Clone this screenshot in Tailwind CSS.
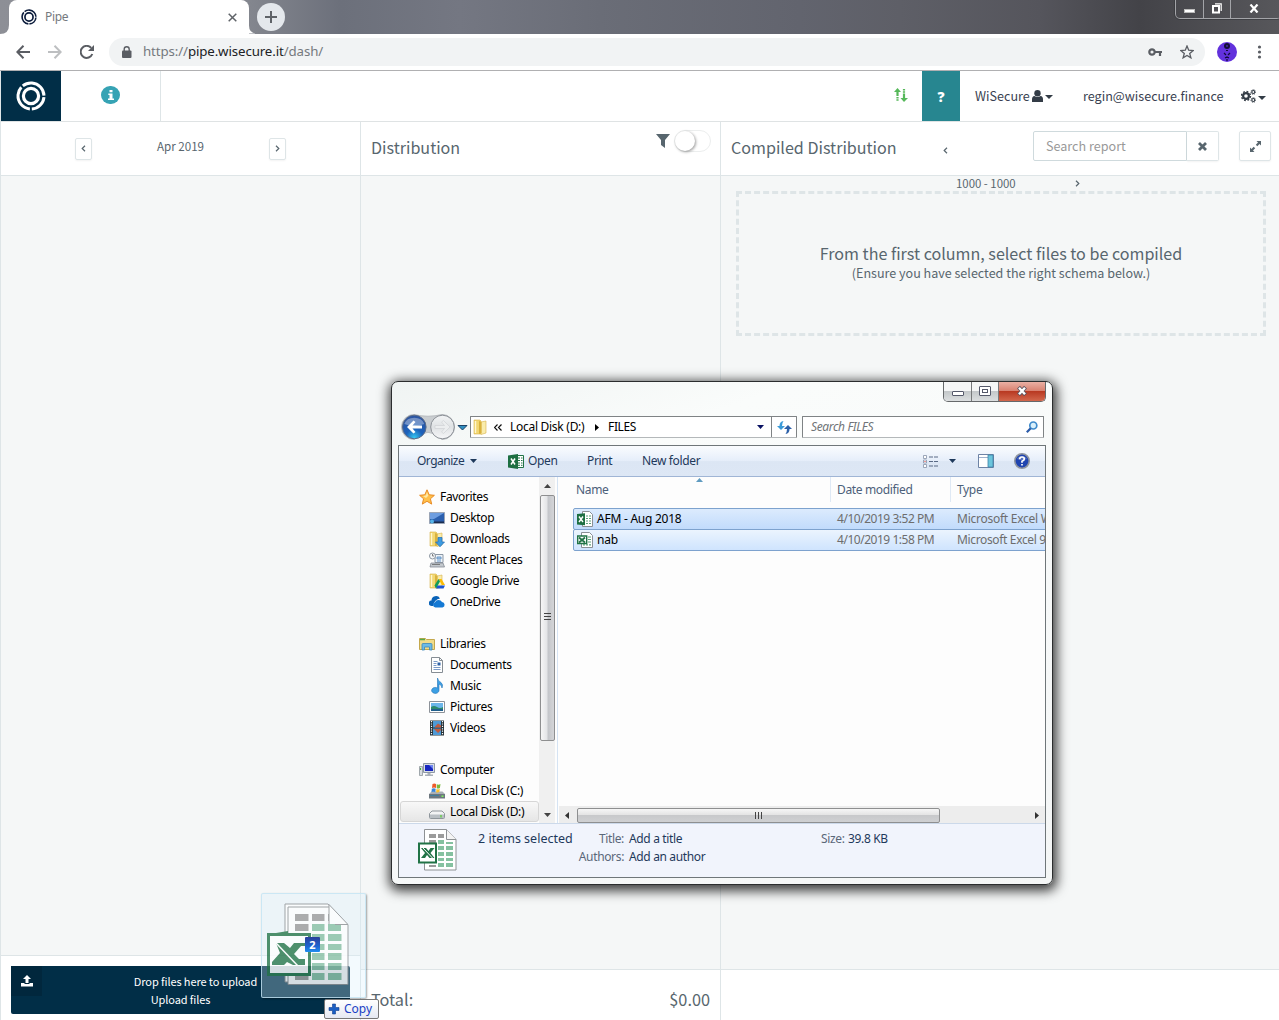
<!DOCTYPE html>
<html lang="en">
<head>
<meta charset="utf-8">
<title>Pipe</title>
<script src="https://cdn.jsdelivr.net/npm/@tailwindcss/browser@4"></script>
</head>
<body class="w-[1279px] h-[1020px] overflow-hidden relative bg-white font-['Noto_Sans_CJK_JP',sans-serif] text-[#58666e] whitespace-nowrap">
<svg class="hidden">
  <symbol id="rings" viewBox="0 0 30 30"><g fill="none" stroke="currentColor"><circle cx="15" cy="15" r="7.6" stroke-width="3.2"/><circle cx="15" cy="15" r="13" stroke-width="3" stroke-dasharray="18.4 2 28.600 2 28.700 2" transform="rotate(4.500 15 15)"/></g></symbol>
  <symbol id="folder" viewBox="0 0 16 16"><path d="M1 1h6l1 1v13H1z" fill="#f3d873" stroke="#d9b44a" stroke-width=".6"/><path d="M8 3l5-1v12l-5 1.5z" fill="#f9ecac" stroke="#d9b44a" stroke-width=".6"/><path d="M6 2v13l2.500-1V3z" fill="#d9b23c"/><path d="M2.500 2v12" stroke="#fff6cf" stroke-width="1.4"/></symbol>
</svg>

<!-- browser chrome -->
<div class="flex h-[34px] bg-[linear-gradient(90deg,#8d8f96_0,#83868e_250px,#6c707b_340px,#747782_460px,#6a6d77_600px,#62646e_800px,#5e5f67_900px,#55555c_1040px,#434348_1140px,#57575b_1279px)]">
  <div class="w-[9px] flex items-end"><svg class="w-[9px] h-[9px]" viewBox="0 0 9 9"><path d="M9 0v9H0Q9 9 9 0z" fill="#fff"/></svg></div>
  <div class="w-[240px] bg-white rounded-t-lg flex items-center">
    <svg class="w-4 h-4 ml-3 text-[#0c1c3c]"><use href="#rings"/></svg>
    <span class="ml-2 w-[183px] font-['Noto_Sans'] text-[12px] tracking-[-0.3px] text-[#75797e]">Pipe</span>
    <svg class="w-[9px] h-[9px]" viewBox="0 0 9 9"><path d="M.7.7l7.6 7.6M8.3.7L.7 8.3" stroke="#5f6368" stroke-width="1.5"/></svg>
  </div>
  <div class="w-[8px] flex items-end"><svg class="w-[9px] h-[9px]" viewBox="0 0 9 9"><path d="M0 0v9h9Q0 9 0 0z" fill="#fff"/></svg></div>
  <div class="pt-[3px]"><div class="w-7 h-7 rounded-full bg-[#e4e8ec] flex items-center justify-center"><svg class="w-3 h-3" viewBox="0 0 12 12"><path d="M6 0v12M0 6h12" stroke="#5f6368" stroke-width="2"/></svg></div></div>
  <div class="ml-auto mr-[-3px] w-[107px] h-[18.5px] flex border border-t-0 border-[#a3a4a8] rounded-b-[5px] outline outline-[#2e2f33]/50">
    <div class="w-[28px] border-r border-[#a3a4a8] flex justify-center pt-[9px]"><div class="w-[11px] h-[4px] bg-white border border-[#bbb]"></div></div>
    <div class="w-[27px] border-r border-[#a3a4a8] flex justify-center pt-[3px]"><svg class="w-[10px] h-[11px]" viewBox="0 0 10 11"><path d="M3 .8h6.2V8" fill="none" stroke="#fff" stroke-width="1.2"/><rect x="1" y="3" width="6" height="6.5" fill="none" stroke="#fff" stroke-width="2"/></svg></div>
    <div class="w-[46px] flex justify-center pt-[4px]"><svg class="w-[10px] h-[9px]" viewBox="0 0 10 9"><path d="M1.500.5l7 8M8.500.5l-7 8" stroke="#fff" stroke-width="2.2"/></svg></div>
  </div>
</div>
<div class="flex items-center h-[37px] bg-white border-b border-[#b0b0b2]">
  <svg class="ml-4 w-[14px] h-[14px]" viewBox="0 0 14 14"><path d="M14 7H2M7.500.8L1.300 7l6.200 6.200" fill="none" stroke="#5a5d63" stroke-width="2"/></svg>
  <svg class="ml-[18px] w-[14px] h-[14px]" viewBox="0 0 14 14"><path d="M0 7h12M6.500.8L12.700 7l-6.200 6.200" fill="none" stroke="#bdbfc1" stroke-width="2"/></svg>
  <svg class="ml-[18px] w-[14px] h-[14px]" viewBox="0 0 14 14"><path d="M12.300 9A6 6 0 1 1 11.200 2.900" fill="none" stroke="#5a5d63" stroke-width="2"/><path d="M14 0v6H8z" fill="#5a5d63"/></svg>
  <div class="ml-[15px] w-[1096px] h-7 rounded-full bg-[#f1f3f4] flex items-center">
    <svg class="ml-[13px] w-[10px] h-[13px]" viewBox="0 0 10 13"><rect x="0" y="4.500" width="9.500" height="7.500" rx="1" fill="#5a5d63"/><path d="M2.200 5V3.200a2.500 2.500 0 0 1 5 0V5" fill="none" stroke="#5a5d63" stroke-width="1.400"/></svg>
    <span class="ml-[11px] font-['Noto_Sans'] text-[13.300px] tracking-[-0.120px] text-[#75797e]">https://<span class="text-[#202124]">pipe.wisecure.it</span>/dash/</span>
    <svg class="ml-auto w-[14px] h-[8px]" viewBox="0 0 14 8"><circle cx="4" cy="4" r="2.700" fill="none" stroke="#5a5d63" stroke-width="2.200"/><path d="M7 4h7M12 4v4" stroke="#5a5d63" stroke-width="2.200"/></svg>
    <svg class="ml-[18px] mr-[11px] w-[14px] h-[14px]" viewBox="0 0 14 14"><path d="M7 1l1.700 4.200 4.500.3-3.500 2.900 1.200 4.400L7 10.400l-3.900 2.400 1.200-4.400L.8 5.500l4.500-.3z" fill="none" stroke="#5a5d63" stroke-width="1.300"/></svg>
  </div>
  <svg class="ml-[12px] w-5 h-5" viewBox="0 0 20 20"><circle cx="10" cy="10" r="10" fill="#6231dc"/><ellipse cx="10" cy="4" rx="3" ry="3" fill="#120b38"/><path d="M9 3.500h2v1H9z" fill="#6231dc"/><path d="M9 8.500h2M7 11l2 2M13 11l-2 2M8 16l2-1 2 1M10 17v2" stroke="#120b38" stroke-width="1.200"/></svg>
  <svg class="ml-[20px] w-[5px] h-[14px]" viewBox="0 0 5 14"><g fill="#5a5d63"><circle cx="2.500" cy="2" r="1.600"/><circle cx="2.500" cy="7" r="1.600"/><circle cx="2.500" cy="12" r="1.600"/></g></svg>
</div>

<!-- application -->
<div class="h-[949px] border-l border-[#dee5e7] flex flex-col">
  <header class="h-[51px] flex-none flex bg-white border-b border-[#dfe3e4] text-[#3a3f51]">
    <div class="w-[60px] h-[50px] bg-[#012e47] flex items-center justify-center text-white"><svg class="w-[30px] h-[30px]"><use href="#rings"/></svg></div>
    <div class="w-[100px] h-[50px] border-r border-[#dee5e7] flex items-center justify-center pb-[2px]"><div class="w-[19px] h-[18px] rounded-full bg-[#36a3b4] flex justify-center items-center"><svg class="w-[6px] h-[10px]" viewBox="0 0 6 10"><path d="M1.500 0h3v2.200h-3zM.3 3.500h4.200v5H6V10H0V8.500h1.500V5H.3z" fill="#fff"/></svg></div></div>
    <div class="ml-auto flex h-[50px] items-center">
      <svg class="w-[14px] h-[16px] mr-[14px] mb-[2px]" viewBox="0 0 14 16"><g fill="#56b85a"><path d="M3.500 1L7 5H4.600v4H2.400V5H0z"/><path d="M2.400 10h2.200v1.600H2.400zM2.400 12.300h2.200v1.500H2.400zM8.900 2h2.200v1.600H8.900zM8.900 4.300h2.200v1.500H8.900zM10 15l-3.500-4h2.400V6.500h2.200V11H14z"/></g></svg>
      <div class="w-[38px] h-[50px] bg-[#278690] flex items-center justify-center text-white font-black text-[14px] font-['Noto_Sans']">?</div>
      <div class="w-[108px] pl-[15px] flex items-center text-[12.600px]"><span class="w-[54px]">WiSecure</span>
        <svg class="ml-[3px] w-[11px] h-[12px]" viewBox="0 0 11 12"><circle cx="5.500" cy="3.200" r="3.200" fill="#333c46"/><path d="M0 12V9.500Q0 6.300 2.500 6q3 2 6 0Q11 6.300 11 9.500V12z" fill="#333c46"/></svg>
        <svg class="ml-[2px] mt-[2px] w-2 h-1" viewBox="0 0 8 4"><path d="M0 0h8L4 4z" fill="#333c46"/></svg></div>
      <div class="w-[173px] pl-[15px] text-[12.600px]">regin@wisecure.finance</div>
      <svg class="w-[15px] h-[14px]" viewBox="0 0 15 14"><g fill="none" stroke="#333c46"><circle cx="5" cy="7" r="2.900" stroke-width="2.200"/><circle cx="5" cy="7" r="4.500" stroke-width="1.400" stroke-dasharray="1.800 1.730"/><circle cx="12.300" cy="3" r="1.500" stroke-width="1.200"/><circle cx="12.300" cy="3" r="2.400" stroke-width=".8" stroke-dasharray="1 .9"/><circle cx="12.300" cy="11" r="1.500" stroke-width="1.200"/><circle cx="12.300" cy="11" r="2.400" stroke-width=".8" stroke-dasharray="1 .9"/></g></svg>
      <svg class="ml-[2px] mr-[13px] mt-[3px] w-2 h-1" viewBox="0 0 8 4"><path d="M0 0h8L4 4z" fill="#333c46"/></svg>
    </div>
  </header>
  <main class="flex-1 flex bg-[#f5f7f7]">
    <section class="w-[360px] border-r border-[#dee5e7] flex flex-col">
      <div class="h-[54px] flex-none bg-white border-b border-[#dee5e7] flex items-center pl-[74px] pr-[74px] justify-between">
        <div class="w-[17px] h-[22px] border border-[#dee5e7] rounded-[2px] shadow-xs flex items-center justify-center"><svg class="w-[5px] h-[7px]" viewBox="0 0 5 7"><path d="M4 .8L1.200 3.500 4 6.200" fill="none" stroke="#58666e" stroke-width="1.200"/></svg></div>
        <span class="text-[11.600px] pb-[4px]">Apr 2019</span>
        <div class="w-[17px] h-[22px] border border-[#dee5e7] rounded-[2px] shadow-xs flex items-center justify-center"><svg class="w-[5px] h-[7px]" viewBox="0 0 5 7"><path d="M1 .8l2.800 2.700L1 6.200" fill="none" stroke="#58666e" stroke-width="1.200"/></svg></div>
      </div>
      <div class="flex-1"></div>
      <div class="h-[65px] bg-white border-t border-[#dee5e7] px-[10px] pt-[10px]">
        <div class="w-[339px] h-[48px] rounded-[2px] bg-[#012e47] flex text-white text-[11px] tracking-[-0.1px]">
          <div class="w-[31px] h-[30px] bg-[#01273d] flex items-center justify-center"><svg class="w-3 h-3" viewBox="0 0 12 12"><path d="M6 0l4 4H7.500v4h-3V4H2zM0 8h3.500v1h5V8H12v3.500H0z" fill="#fff"/></svg></div>
          <div class="flex-1 pr-[31px] pt-[6px] leading-[18px] text-center flex flex-col items-center"><span class="ml-[30px]">Drop files here to upload</span><span>Upload files</span></div>
        </div>
      </div>
    </section>
    <section class="w-[360px] border-r border-[#dee5e7] flex flex-col">
      <div class="h-[54px] flex-none bg-white border-b border-[#dee5e7] flex pl-[10px]">
        <h2 class="text-[16.100px] leading-[50px]">Distribution</h2>
        <svg class="ml-auto mt-[12px] w-[14px] h-[14px]" viewBox="0 0 14 14"><path d="M0 0h14L9 6v8L5 11V6z" fill="#58666e"/></svg>
        <div class="ml-[4px] mr-[9px] mt-[8px] w-[37px] h-[22px] rounded-full border border-[#eceeee]"><div class="w-5 h-5 rounded-full bg-white shadow-[1px_1px_3px_rgba(0,0,0,.4)]"></div></div>
      </div>
      <div class="flex-1"></div>
      <div class="h-[51px] bg-white border-t border-[#dee5e7] pl-[10px] pr-[10px] pt-[12px] flex justify-between text-[16.300px] leading-[34px]"><span>Total:</span><span>$0.00</span></div>
    </section>
    <section class="flex-1 flex flex-col">
      <div class="h-[54px] flex-none bg-white border-b border-[#dee5e7] flex pl-[10px]">
        <h2 class="w-[212px] text-[16.100px] leading-[50px]">Compiled Distribution</h2>
        <svg class="mt-[25px] w-[5px] h-[7px]" viewBox="0 0 5 7"><path d="M4 .8L1.200 3.500 4 6.200" fill="none" stroke="#58666e" stroke-width="1.200"/></svg>
        <div class="ml-auto mt-[9px] w-[154px] h-[30px] border border-[#cfdadd] rounded-l-[2px] pl-[12px] text-[12.600px] leading-[28px] text-[#999]">Search report</div>
        <div class="mt-[9px] w-[32px] h-[30px] border border-l-0 border-[#dee5e7] rounded-r-[2px] shadow-xs flex items-center justify-center"><svg class="w-[9px] h-[9px]" viewBox="0 0 9 9"><path d="M1 1l7 7M8 1L1 8" stroke="#58666e" stroke-width="2.800"/></svg></div>
        <div class="ml-[20px] mr-[8px] mt-[9px] w-[32px] h-[30px] border border-[#dee5e7] rounded-[2px] shadow-xs flex items-center justify-center"><svg class="w-[11px] h-[11px]" viewBox="0 0 11 11"><path d="M6.500 0H11v4.500L9.500 3 7.300 5.200 5.800 3.700 8 1.500zM4.500 11H0V6.500L1.500 8l2.200-2.200 1.500 1.500L3 9.500z" fill="#58666e"/></svg></div>
      </div>
      <div class="h-[15px] flex pl-[235px] text-[11.400px] leading-[15px]"><span class="w-[119px]">1000 - 1000</span><svg class="mt-[4px] w-[5px] h-[7px]" viewBox="0 0 5 7"><path d="M1 .8l2.800 2.700L1 6.200" fill="none" stroke="#58666e" stroke-width="1.200"/></svg></div>
      <div class="ml-[15px] mr-[13px] h-[145px] border-3 border-dashed border-[#dee5e7] flex flex-col items-center pt-[49px]">
        <span class="text-[16.100px] leading-[21px]">From the first column, select files to be compiled</span>
        <span class="text-[12.550px] leading-[18px]">(Ensure you have selected the right schema below.)</span>
      </div>
      <div class="flex-1"></div>
      <div class="h-[51px] bg-white border-t border-[#dee5e7]"></div>
    </section>
  </main>
</div>

<!-- file explorer window -->
<div class="absolute left-[391px] top-[381px] w-[662px] h-[504px] border border-[#2b2d2e] rounded-[7px] bg-[linear-gradient(160deg,#f0f4f3,#fafcfb_20%,#f7f9f9_60%,#f4f6f6)] shadow-[1px_3px_12px_3px_rgba(0,0,0,.75)] font-['Noto_Sans'] text-[12px] tracking-[-0.35px] text-black">
  <div class="h-[34px] flex justify-end pr-[6px]">
    <div class="h-[20px] w-[103px] flex border border-t-0 border-[#66696b] rounded-b-[5px] overflow-hidden">
      <div class="w-[28px] border-r border-[#77797b] bg-[linear-gradient(#f5f6f6_45%,#c4c8ca_50%,#dcdfe0)] flex justify-center pt-[9px]"><div class="w-[12px] h-[5px] bg-white border border-[#55596a] rounded-[1px]"></div></div>
      <div class="w-[27px] border-r border-[#77797b] bg-[linear-gradient(#f5f6f6_45%,#c4c8ca_50%,#dcdfe0)] flex justify-center pt-[4px]"><div class="w-[12px] h-[10px] border border-[#55596a] rounded-[1px] bg-white flex items-center justify-center"><div class="w-[6px] h-[4px] border border-[#55596a]"></div></div></div>
      <div class="flex-1 bg-[linear-gradient(#eab0a4,#d98372_45%,#b93a22_50%,#d2674c)] flex justify-center pt-[4px]"><svg class="w-[12px] h-[10px]" viewBox="0 0 12 10"><path d="M2.500 1.200l7 7.600M9.500 1.200l-7 7.600" stroke="#5b5560" stroke-width="4"/><path d="M3 1.700l6 6.600M9 1.700L3 8.300" stroke="#fff" stroke-width="2.400"/></svg></div>
    </div>
  </div>
  <div class="h-[22px] flex items-center pl-[8px]">
    <svg class="flex-none w-[70px] h-[28px]" viewBox="0 0 70 28">
      <defs><radialGradient id="nb" cx=".5" cy=".95" r=".8"><stop offset="0" stop-color="#35c8f2"/><stop offset=".45" stop-color="#1c62bb"/><stop offset="1" stop-color="#2b56a4"/></radialGradient><linearGradient id="nf" x2="0" y2="1"><stop offset="0" stop-color="#f3f5f6"/><stop offset=".5" stop-color="#dfe2e4"/><stop offset="1" stop-color="#f6f7f8"/></linearGradient></defs>
      <path d="M14 1.500Q28 5 42 1.500a12.500 12.500 0 0 1 0 25Q28 12 14 26.500a12.500 12.500 0 0 1 0-25z" fill="#c9cdd0" stroke="#b9bdc1"/>
      <circle cx="14.300" cy="14" r="11.800" fill="url(#nb)" stroke="#5b6c88"/><path d="M4.300 11a10.500 9 0 0 1 20 0q-10 4-20 0z" fill="#fff" opacity=".35"/><path d="M7 14l6.500-6.500L15.500 9l-3 3.500H22v3h-9.500l3 3.500-2 1.500z" fill="#fff"/>
      <circle cx="42.500" cy="14" r="11.800" fill="url(#nf)" stroke="#8b9096"/><path d="M50 14l-6.500-6.500-2 1.500 3 3.500H35v3h9.500l-3 3.500 2 1.500z" fill="#eceeef" stroke="#d0d3d6" stroke-width=".7"/>
      <path d="M58 12.500h9l-4.500 4.500z" fill="#2f8ec0" stroke="#1d4468"/></svg>
    <div class="w-[327px] h-[22px] flex-none flex items-center border border-[#7f8385] border-b-[#b4b8ba] rounded-[1px] bg-white">
      <svg class="ml-[2px] w-4 h-4"><use href="#folder"/></svg>
      <svg class="ml-[5px] w-[8px] h-[7px]" viewBox="0 0 8 7"><path d="M3.500.5l-3 3 3 3M7.500.5l-3 3 3 3" fill="none" stroke="#111" stroke-width="1.200"/></svg>
      <span class="ml-[8px] w-[85px] tracking-[-0.28px]">Local Disk (D:)</span>
      <svg class="w-[4px] h-[7px]" viewBox="0 0 4 7"><path d="M0 0l4 3.500L0 7z" fill="#000"/></svg>
      <span class="ml-[9px]">FILES</span>
      <svg class="ml-auto mr-[7px] w-[7px] h-[4px]" viewBox="0 0 7 4"><path d="M0 0h7L3.500 4z" fill="#0a1263"/></svg>
      <div class="w-[25px] h-full border-l border-[#7f8385] flex items-center justify-center"><svg class="w-[15px] h-[13px]" viewBox="0 0 15 13"><path d="M6.500 0Q2.500.5 2.500 5H0l4 4 4-4H5Q5 2 6.500 0z" fill="#3a9ad8"/><path d="M8.500 13q4-.5 4-5H15L11 4 7 8h3Q10 11 8.500 13z" fill="#2a5fa8"/></svg></div>
    </div>
    <div class="ml-[5px] w-[242px] h-[22px] flex items-center border border-[#7f8385] border-b-[#b4b8ba] rounded-[1px] bg-white pl-[8px] pr-[5px] italic text-[#707478]"><span>Search FILES</span><svg class="ml-auto w-[12px] h-[12px]" viewBox="0 0 12 12"><circle cx="7.300" cy="4.500" r="3.500" fill="#d9f0fb" stroke="#3e8acb" stroke-width="1.700"/><path d="M4.700 7.200L.8 11.200" stroke="#2a5aa8" stroke-width="2.200"/></svg></div>
  </div>
  <div class="mt-[7px] ml-[6px] w-[648px] h-[433px] border border-[#6f7679] bg-[#fdfdfd] flex flex-col">
    <div class="h-[31px] flex-none border-b border-[#a0b5d5] bg-[linear-gradient(#fafcfe,#e6eefa_48%,#dce6f4_52%,#dde7f5)] flex items-center text-[#1e395b] pl-[18px]">
      <span class="w-[53px] tracking-[-0.5px]">Organize</span><svg class="w-[7px] h-[4px]" viewBox="0 0 7 4"><path d="M0 0h7L3.500 4z" fill="#1e395b"/></svg>
      <svg class="ml-[31px] w-[16px] h-[15px]" viewBox="0 0 16 15"><path d="M9 1.500h6.500v12H9z" fill="#fff" stroke="#217346"/><path d="M10 4h2M13 4h1.500M10 6.500h2M13 6.500h1.500M10 9h2M13 9h1.500M10 11.300h2M13 11.300h1.500" stroke="#217346"/><path d="M0 1.500L10 0v15L0 13.500z" fill="#1d6f42"/><path d="M3 4.500l4 6M7 4.500l-4 6" stroke="#fff" stroke-width="1.500"/></svg>
      <span class="ml-[4px] w-[59px]">Open</span>
      <span class="w-[55px]">Print</span>
      <span>New folder</span>
      <svg class="ml-auto w-[15px] h-[13px]" viewBox="0 0 15 13"><path d="M.5.500h3v3h-3zM.5 5h3v3h-3zM.5 9.500h3v3h-3z" fill="#fff" stroke="#8592a8" stroke-width=".8"/><path d="M6 2h4M11 2h4M6 6.500h4M11 6.500h4M6 11h4M11 11h4" stroke="#5a6a85"/><path d="M1.500 6.500h1" stroke="#d33"/></svg>
      <svg class="ml-[11px] w-[7px] h-[4px]" viewBox="0 0 7 4"><path d="M0 0h7L3.500 4z" fill="#1e395b"/></svg>
      <svg class="ml-[22px] w-[16px] h-[14px]" viewBox="0 0 16 14"><path d="M.5.500h15v13H.5z" fill="#fff" stroke="#6d83a5"/><path d="M1 3.500h9" stroke="#9fb1cc"/><path d="M10 1h5v12h-5z" fill="#6cc5dc" stroke="#3c84a8" stroke-width=".8"/></svg>
      <svg class="ml-[20px] mr-[15px] w-[16px] h-[16px]" viewBox="0 0 16 16"><circle cx="8" cy="8" r="7.200" fill="#1f44b0" stroke="#8f959f" stroke-width="1.600"/><path d="M3 6a5.500 5 0 0 1 10 0q-5 2-10 0z" fill="#fff" opacity=".25"/><path d="M5.700 6.200Q5.700 4 8 4t2.300 2Q10.300 7.300 8 8.300v1.400M8 10.900v1.700" fill="none" stroke="#fff" stroke-width="1.700"/></svg>
    </div>
    <div class="flex-1 flex min-h-0">
      <nav class="w-[140px] pt-[9px] leading-[21px]">
        <div class="h-[21px] flex items-center pl-[20px]"><svg class="w-4 h-4 mr-[5px]" viewBox="0 0 16 16"><path d="M8 .8l2.200 5 5.200.5-4 3.500 1.300 5.300L8 12.300l-4.700 2.800 1.300-5.300-4-3.500 5.200-.5z" fill="#ffc04a" stroke="#e88a24"/><path d="M8 3l1.300 3.700L7 9 4 7l2.800-.5z" fill="#ffe9a8"/></svg><span>Favorites</span></div>
        <div class="h-[21px] flex items-center pl-[30px]"><svg class="w-4 h-4 mr-[5px]" viewBox="0 0 16 16"><path d="M.5 2.500h15v11H.5z" fill="#2b5fae" stroke="#9aa4b5"/><path d="M1 3h14L5 9H1z" fill="#6d9de0"/><path d="M1 11.500h14V13H1z" fill="#1b2d4e"/><circle cx="3" cy="11.500" r="2" fill="#56b3e8"/></svg><span>Desktop</span></div>
        <div class="h-[21px] flex items-center pl-[30px]"><svg class="w-4 h-4 mr-[5px]" viewBox="0 0 16 16"><use href="#folder"/><path d="M9 6.500h4V11h2.500L11 15.800 6.500 11H9z" fill="#3d9be0" stroke="#1f6cb5" stroke-width=".7"/></svg><span>Downloads</span></div>
        <div class="h-[21px] flex items-center pl-[30px]"><svg class="w-4 h-4 mr-[5px]" viewBox="0 0 16 16"><path d="M6 2.500h8v8H6z" fill="#eef3f8" stroke="#8b97a5"/><path d="M8 5h4v2H8zM8 9h4" stroke="#6b98c8" fill="#a8c8e8"/><path d="M2 11h12l1.500 4H1z" fill="#c3c8cd" stroke="#858c94" stroke-width=".8"/><circle cx="3.500" cy="4" r="3" fill="#f4f6f8" stroke="#8d96a1"/><path d="M3.500 2v2H5M3 12.500h8" stroke="#666" stroke-width=".8" fill="none"/></svg><span>Recent Places</span></div>
        <div class="h-[21px] flex items-center pl-[30px]"><svg class="w-4 h-4 mr-[5px]" viewBox="0 0 16 16"><use href="#folder"/><path d="M9.500 6h3L16 12h-3z" fill="#fbbc05"/><path d="M9.500 6L5.500 12.500 7 15.500l4-7z" fill="#0f9d58"/><path d="M8.500 12.500H16l-1.500 3H7z" fill="#1a56d6"/></svg><span>Google Drive</span></div>
        <div class="h-[21px] flex items-center pl-[30px]"><svg class="w-4 h-4 mr-[5px]" viewBox="0 0 16 16"><path d="M4 12H2.500a2.700 2.700 0 0 1 0-5.400A4.500 4.500 0 0 1 11 4.500Q5.500 5 4 12z" fill="#0a63b8"/><path d="M6.500 13.500a2.700 2.700 0 0 1-.5-5.300A4 4 0 0 1 13 8 2.800 2.800 0 0 1 13.500 13.500z" fill="#1479d4"/></svg><span>OneDrive</span></div>
        <div class="h-[21px]"></div>
        <div class="h-[21px] flex items-center pl-[20px]"><svg class="w-4 h-4 mr-[5px]" viewBox="0 0 16 16"><path d="M.5 2.500h6l1 1h8v10H.5z" fill="#f0dc8a" stroke="#c4a84d"/><path d="M1 3.500h5" stroke="#58a84a" stroke-width="1.500"/><path d="M3 14V8.500q0-1 1-1h8q1 0 1 1V14h-2.500v-3h-5v3z" fill="#6cbbe6" stroke="#3c86b8" stroke-width=".8"/></svg><span>Libraries</span></div>
        <div class="h-[21px] flex items-center pl-[30px]"><svg class="w-4 h-4 mr-[5px]" viewBox="0 0 16 16"><path d="M2.500.500h8l3 3v12h-11z" fill="#fff" stroke="#868d94"/><path d="M10.500.500v3h3" fill="none" stroke="#868d94"/><path d="M4.500 4.500h4M4.500 6.500h3M4.500 8.500h3M4.500 10.500h7M4.500 12.500h7" stroke="#6b8ec2" stroke-width=".9"/><path d="M8.500 5.500h3v3h-3z" fill="#2d61a6"/></svg><span>Documents</span></div>
        <div class="h-[21px] flex items-center pl-[30px]"><svg class="w-4 h-4 mr-[5px]" viewBox="0 0 16 16"><path d="M8.500 0q.5 3 3.500 4.500 2.500 2 1 5.500-.5-3.500-3-4v6.500a3.700 3 0 1 1-1.500-2.500z" fill="#3da0e4" stroke="#2273b8" stroke-width=".6"/></svg><span>Music</span></div>
        <div class="h-[21px] flex items-center pl-[30px]"><svg class="w-4 h-4 mr-[5px]" viewBox="0 0 16 16"><path d="M.5 2.500h15v11H.5z" fill="#fff" stroke="#8d9299"/><path d="M2 4h12v8H2z" fill="#6cb6ea"/><path d="M2 8q3-2 6 0t6 0v4H2z" fill="#2c8a6c"/><path d="M2 10h12v2H2z" fill="#1f5f8c"/></svg><span>Pictures</span></div>
        <div class="h-[21px] flex items-center pl-[30px]"><svg class="w-4 h-4 mr-[5px]" viewBox="0 0 16 16"><path d="M1 .5h14v15H1z" fill="#263238"/><path d="M4 1h8v6.500H4zM4 8.500h8V15H4z" fill="#4f9ad6"/><path d="M6 6.500l3-3 3 2v2H6zM5 9l4 4 3-3V9z" fill="#c05b3f"/><path d="M2.500 1v14M13.500 1v14" stroke="#fff" stroke-width="1.200" stroke-dasharray="1.200 1.200"/></svg><span>Videos</span></div>
        <div class="h-[21px]"></div>
        <div class="h-[21px] flex items-center pl-[20px]"><svg class="w-4 h-4 mr-[5px]" viewBox="0 0 16 16"><path d="M.5 4.500h3v9h-3z" fill="#d8dce0" stroke="#8d949b" stroke-width=".8"/><path d="M1.500 6v2" stroke="#3fae3f"/><path d="M4.500 1.500h11v9h-11z" fill="#d8dde4" stroke="#8d97a5"/><path d="M6 3h8v6H6z" fill="#1726c0"/><path d="M10 3h4v4z" fill="#6f86f0"/><path d="M8.500 11h3v1.500H14V14H6v-1.500h2.500z" fill="#aab0b8"/></svg><span>Computer</span></div>
        <div class="h-[21px] flex items-center pl-[30px]"><svg class="w-4 h-4 mr-[5px]" viewBox="0 0 16 16"><path d="M2.500 8.500h11L16 11v4H0v-4z" fill="#a9b0b7"/><path d="M0 11h16v4.500H0z" fill="#6d777f"/><path d="M1 12.500h9" stroke="#3f7d9a"/><path d="M12.500 13.200h2" stroke="#7dff5a" stroke-width="1.400"/><path d="M3.500 1q2-1 3.500 0v4q-2-1-4 0z" fill="#ee5a2b"/><path d="M7.700 1.300q2 .8 3.800-.3l-.6 4q-1.600 1-3.200.2z" fill="#7bb93c"/><path d="M2.800 5.700q2-.8 3.900 0l-.4 3.300q-2-.7-3.800 0z" fill="#3a85d8"/><path d="M7.400 6q1.600.8 3.400 0l-.5 3q-1.500.8-3.100.2z" fill="#fbc02d"/></svg><span class="tracking-[-0.28px]">Local Disk (C:)</span></div>
        <div class="h-[21px] ml-[1px] flex items-center pl-[28px] border border-[#d6d6d6] rounded-[3px] bg-[linear-gradient(#f8f8f8,#e6e6e6)]"><svg class="w-4 h-4 mr-[5px]" viewBox="0 0 16 16"><path d="M3 7h10L15.500 9.500v4Q15.500 14.500 14.500 14.500H1.500Q.5 14.500 .5 13.500V9.500z" fill="#f2f3f4" stroke="#8f969c"/><path d="M1 10.500h14V14H1z" fill="#b9bfc4"/><path d="M12 11v2.500" stroke="#5bd03a" stroke-width="1.300"/></svg><span class="tracking-[-0.28px]">Local Disk (D:)</span></div>
      </nav>
      <div class="w-[16px] bg-[#f0f0f0] flex flex-col items-center">
        <svg class="mt-[7px] mb-[7px] w-[7px] h-[4px] flex-none" viewBox="0 0 7 4"><path d="M0 4h7L3.500 0z" fill="#444"/></svg>
        <div class="w-[15px] h-[246px] flex-none rounded-[2px] border border-[#8e8f90] bg-[linear-gradient(90deg,#f6f6f6,#e4e5e7_45%,#c4c6ca_55%,#d4d5d8)] flex flex-col items-center justify-center gap-[2px] pb-[3px]"><div class="w-[7px] h-px bg-[#444]"></div><div class="w-[7px] h-px bg-[#444]"></div><div class="w-[7px] h-px bg-[#444]"></div></div>
        <svg class="mt-auto mb-[6px] w-[7px] h-[4px]" viewBox="0 0 7 4"><path d="M0 0h7L3.500 4z" fill="#444"/></svg>
      </div>
      <div class="w-[3px] border-r border-[#d5e3f3] mr-px"></div>
      <div class="flex-1 min-w-0 flex flex-col overflow-hidden">
        <div class="h-[25px] flex-none flex leading-[26px] text-[#4c607a]">
          <div class="w-[272px] pl-[17px] border-r border-[#dfe9f5] flex"><span class="w-[32px]">Name</span><svg class="ml-[88px] mt-px w-[7px] h-[4px]" viewBox="0 0 7 4"><path d="M0 4h7L3.500 0z" fill="#5f9bc0"/></svg></div>
          <div class="w-[120px] pl-[6px] border-r border-[#dfe9f5]">Date modified</div>
          <div class="pl-[6px]">Type</div>
        </div>
        <div class="mt-[6px] ml-[14px] w-[500px] h-[22px] flex-none border border-[#7da2ce] rounded-[2px] bg-[linear-gradient(#dcebfd,#c1dbfc)] flex items-center text-[#6d6d6d]">
          <svg class="ml-[3px] w-4 h-4" viewBox="0 0 16 16"><path d="M5.500.500h7l3 3v12h-10z" fill="#fff" stroke="#8a9096"/><path d="M9 5h2M12 5h2M9 7.500h2M12 7.500h2M9 10h2M12 10h2M9 12.500h2M12 12.500h2" stroke="#5aa27a" stroke-width="1.200"/><path d="M0 3l8-.8v12L0 13.500z" fill="#1d6f42"/><path d="M2 5.500l4 5.500M6 5.500L2 11" stroke="#fff" stroke-width="1.400"/></svg>
          <span class="ml-[4px] w-[240px] tracking-[-0.25px] text-black">AFM - Aug 2018</span><span class="w-[120px] tracking-[-0.47px]">4/10/2019 3:52 PM</span><span class="tracking-[-0.25px]">Microsoft Excel W</span>
        </div>
        <div class="mt-[-1px] ml-[14px] w-[500px] h-[22px] flex-none border border-[#7da2ce] rounded-[2px] bg-[linear-gradient(#ebf4fe,#cfe4fe)] flex items-center text-[#6d6d6d]">
          <svg class="ml-[3px] w-4 h-4" viewBox="0 0 16 16"><path d="M4.500.500h8l3 3v12h-11z" fill="#fff" stroke="#8a9096"/><path d="M11 5h3M11 7.500h3M11 10h3M6 12.800h2M9 12.800h2M12 12.800h2" stroke="#5aa27a" stroke-width="1.200"/><path d="M.7 4h9v7.500h-9z" fill="#fff" stroke="#217346" stroke-width="1.400"/><path d="M2 5.500l6 5M8 5.500l-6 5" stroke="#217346" stroke-width="1.800"/></svg>
          <span class="ml-[4px] w-[240px] tracking-[-0.25px] text-black">nab</span><span class="w-[120px] tracking-[-0.47px]">4/10/2019 1:58 PM</span><span class="tracking-[-0.35px]">Microsoft Excel 9</span>
        </div>
        <div class="flex-1"></div>
        <div class="h-[17px] flex-none bg-[#ededed] flex items-center pl-[6px] pt-px">
          <svg class="w-[4px] h-[7px]" viewBox="0 0 4 7"><path d="M4 0v7L0 3.500z" fill="#333"/></svg>
          <div class="ml-[8px] w-[363px] h-[15px] border border-[#8e8f90] rounded-[2px] bg-[linear-gradient(#f6f6f6,#e4e4e4_45%,#c8c9cb_50%,#cfd0d2)] flex items-center justify-center gap-[2px]"><div class="w-px h-[7px] bg-[#444]"></div><div class="w-px h-[7px] bg-[#444]"></div><div class="w-px h-[7px] bg-[#444]"></div></div>
          <svg class="ml-auto mr-[6px] w-[4px] h-[7px]" viewBox="0 0 4 7"><path d="M0 0v7l4-3.500z" fill="#333"/></svg>
        </div>
      </div>
    </div>
    <div class="h-[54px] flex-none border-t border-t-[#ccd9ea] bg-[#f1f4fc] flex text-[#1e395b] leading-[18px]">
      <svg class="ml-[19px] mt-[5px] w-[39px] h-[42px]" viewBox="0 0 39 42"><path d="M6.500.500h22l9.500 10v30.500H6.500z" fill="#fff" stroke="#8e9194"/><path d="M28.500.500v10H38" fill="#f4f4f4" stroke="#8e9194"/><g fill="#9b9b9b"><path d="M11 5h7v4h-7zM20 5h6v4h-6zM11 11h7v3h-7z"/></g><g fill="#85c1a0"><path d="M20 11h6v4h-6zM28 13h7v2h-7zM20 17h6v4h-6zM28 17h7v4h-7zM20 23h6v4h-6zM28 23h7v4h-7zM20 29h6v3h-6zM28 29h7v3h-7zM20 34h6v4h-6zM28 34h7v4h-7z"/></g><path d="M11 36h7v2h-7z" fill="#9b9b9b"/><path d="M1 14.500h17v19H1z" fill="#fff" stroke="#217346" stroke-width="2"/><path d="M3 19h5l2.500 3 2-3h4l-4 5 4 5h-5l-2.500-3-2 3H3l4-5z" fill="#217346"/><path d="M5 19l9.500 10" stroke="#fff"/></svg>
      <div class="ml-[21px] w-[96px] pt-[6px] text-[12.500px] tracking-normal">2 items selected</div>
      <div class="pt-[6px] w-[50px] flex flex-col items-end text-[#5a6779]"><span>Title:</span><span>Authors:</span></div>
      <div class="pt-[6px] ml-[5px] w-[192px] flex flex-col items-start"><span>Add a title</span><span>Add an author</span></div>
      <div class="pt-[6px] w-[27px] text-[#5a6779]">Size:</div><div class="pt-[6px]">39.8 KB</div>
    </div>
  </div>
</div>

<!-- dragged files -->
<div class="absolute left-[261px] top-[893px] w-[105px] h-[105px] rounded-[2px] border border-[#c2e3f2]/80 bg-[#d8f0fc]/30 shadow-[1px_1px_2px_rgba(0,0,0,.35)]">
  <svg class="w-[103px] h-[103px]" viewBox="1 1 103 103">
    <g opacity=".78"><path d="M24 11h43l18 20v58H24z" fill="#fff" stroke="#8a8d90"/><path d="M27 14h41l19 18v59.500H27z" fill="#fff" stroke="#8a8d90"/><g fill="#999"><path d="M34 21h13.500v7H34zM51 21h12.500v7H51zM67 21h2v7h-2zM34 31h13.500v7H34zM34 80h13.500v7H34z"/></g><path d="M68 11.500v20h19z" fill="#fff" stroke="#8a8d90"/><g fill="#85bfa2"><path d="M51 31h12.500v7H51zM74 32h6v6h-6zM67 31h7v7h-7zM51 41h12.500v7H51zM67 41h13.500v7H67zM51 51h12.500v6H51zM67 51h13.500v6H67zM51 60h12.500v7H51zM67 60h13.500v7H67zM51 70h12.500v7H51zM67 70h13.500v7H67zM51 80h12.500v7H51zM67 80h13.500v7H67z"/></g>
    <path d="M15 40l12-2v5z" fill="#217346"/><path d="M7.500 41.500h41v40h-41z" fill="#fff" stroke="#217346" stroke-width="3"/><path d="M11 50h12l6 5 4-5h11v3h-4l-7 8 5 5h6v6H32l-6-3-3 3H11v-3l8-9-4-10h-4z" fill="#217346"/><path d="M15 50l22 23" stroke="#fff" stroke-width="1.500"/></g>
  </svg>
</div>
<div class="absolute left-[305px] top-[937px] w-[15px] h-[15px] rounded-[1px] bg-[linear-gradient(#2a3f9a,#1f63cf_60%,#1f8df0)] text-white text-[11px] leading-[15px] text-center font-bold font-['Noto_Sans']">2</div>
<div class="absolute left-[324px] top-[999px] w-[55px] h-[20px] rounded-[2px] border border-[#777] bg-[linear-gradient(#fff,#e6e9f2)] flex items-center pl-[3px] font-['Noto_Sans'] text-[12px] text-[#1a3fc4]"><svg class="w-[12px] h-[12px] mr-[4px]" viewBox="0 0 12 12"><path d="M4.500 1h3v3.500H11v3H7.500V11h-3V7.500H1v-3h3.500z" fill="#1a5fc4" stroke="#12408f" stroke-width=".6"/></svg>Copy</div>
</body>
</html>
